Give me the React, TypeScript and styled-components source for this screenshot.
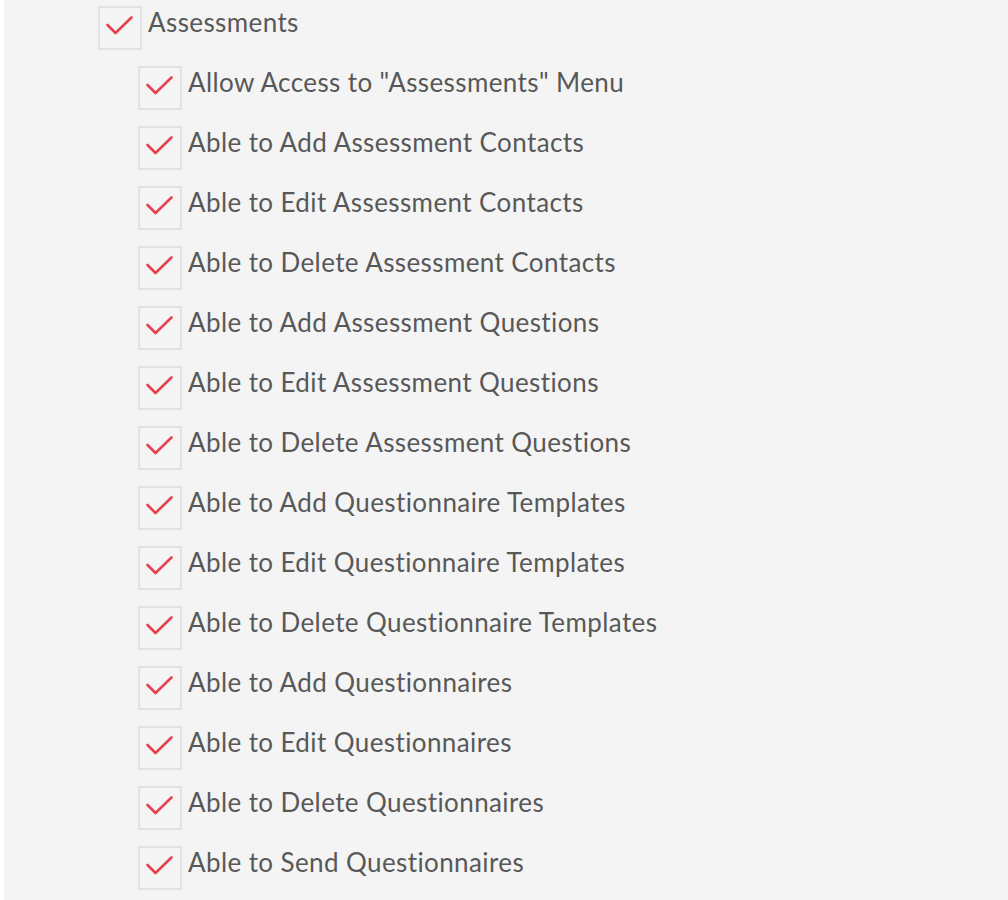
import React from 'react';
import styled, { createGlobalStyle } from 'styled-components';

// =============================================================================
// Data
// =============================================================================

const PERMISSIONS = [
  'Allow Access to "Assessments" Menu',
  'Able to Add Assessment Contacts',
  'Able to Edit Assessment Contacts',
  'Able to Delete Assessment Contacts',
  'Able to Add Assessment Questions',
  'Able to Edit Assessment Questions',
  'Able to Delete Assessment Questions',
  'Able to Add Questionnaire Templates',
  'Able to Edit Questionnaire Templates',
  'Able to Delete Questionnaire Templates',
  'Able to Add Questionnaires',
  'Able to Edit Questionnaires',
  'Able to Delete Questionnaires',
  'Able to Send Questionnaires',
];

// =============================================================================
// Styled Components
// =============================================================================

const GlobalStyle = createGlobalStyle`
  html, body {
    margin: 0;
    background: #ffffff;
  }
`;

const Panel = styled.div`
  margin-left: 4px;
  min-height: 900px;
  background: #f4f4f4;
  padding: 6px 0 0 94px;
  box-sizing: border-box;
  font-family: Lato, 'Open Sans', sans-serif;
  color: #585858;
`;

const Group = styled.div`
  display: flex;
  flex-direction: column;
  gap: 16px;
`;

const Children = styled.div`
  display: flex;
  flex-direction: column;
  gap: 16px;
  padding-left: 40px;
`;

const Row = styled.label`
  display: flex;
  align-items: flex-start;
  gap: 6px;
  cursor: pointer;
`;

const Box = styled.span`
  flex: 0 0 auto;
  width: 44px;
  height: 44px;
  box-sizing: border-box;
  border: 2px solid #e2e2e2;
  background: #f4f4f4;
  display: flex;
  align-items: center;
  justify-content: center;
`;

const Label = styled.span`
  font-size: 26px;
  line-height: 32px;
  letter-spacing: 0.4px;
  white-space: nowrap;
`;

// =============================================================================
// Main Component
// =============================================================================

const Check = () => (
  <svg width="44" height="44" viewBox="0 0 44 44" style={{ margin: -2 }}>
    <polyline
      points="9.5,19 17.5,27 33.5,11.5"
      fill="none"
      stroke="#e5424f"
      strokeWidth="2.6"
      strokeLinecap="round"
      strokeLinejoin="round"
    />
  </svg>
);

const Item = ({ text }: { text: string }) => (
  <Row>
    <Box>
      <Check />
    </Box>
    <Label>{text}</Label>
  </Row>
);

const App = () => (
  <>
    <GlobalStyle />
    <Panel>
      <Group>
        <Item text="Assessments" />
        <Children>
          {PERMISSIONS.map((p) => (
            <Item key={p} text={p} />
          ))}
        </Children>
      </Group>
    </Panel>
  </>
);

export default App;
